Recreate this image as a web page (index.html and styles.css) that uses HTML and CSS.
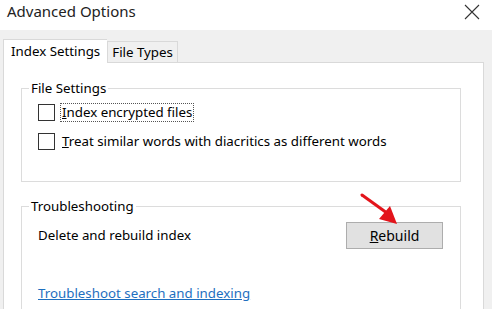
FILE: index.html
```html
<!DOCTYPE html>
<html lang="en">

<head>
    <meta charset="UTF-8">
    <meta name="viewport" content="width=device-width, initial-scale=1.0">
    <title>Advanced Options</title>
    <link rel="stylesheet" href="styles.css">
</head>

<body class="dialog">
    <!-- Barra de titulo -->
    <header class="dialog__title">
        <h1 class="title__text">Advanced Options</h1>
        <svg class="title__close" width="16" height="16" viewBox="0 0 16 16">
            <path d="M1 1 L15 15 M15 1 L1 15" stroke="#333" stroke-width="1.1" fill="none" />
        </svg>
    </header>

    <!-- Pestañas -->
    <nav class="tabs">
        <span class="tab tab--active">Index Settings</span>
        <span class="tab">File Types</span>
    </nav>

    <div class="dialog__body">
        <main class="panel">
            <fieldset class="group group--files">
                <legend class="group__legend">File Settings</legend>
                <label class="check">
                    <span class="check__box"></span>
                    <span class="check__text check__text--focus"><u>I</u>ndex encrypted files</span>
                </label>
                <label class="check">
                    <span class="check__box"></span>
                    <span class="check__text"><u>T</u>reat similar words with diacritics as different words</span>
                </label>
            </fieldset>

            <fieldset class="group group--trouble">
                <legend class="group__legend">Troubleshooting</legend>
                <div class="rebuild">
                    <span>Delete and rebuild index</span>
                    <div class="rebuild__action">
                        <svg class="rebuild__arrow" width="44" height="34" viewBox="0 0 44 34">
                            <path d="M2 2 L27 20" stroke="#e3141b" stroke-width="3" stroke-linecap="round" />
                            <path d="M19 26 L37 31 L30 13 Z" fill="#e3141b" />
                        </svg>
                        <button class="btn"><u>R</u>ebuild</button>
                    </div>
                </div>
                <a class="link" href="#">Troubleshoot search and indexing</a>
            </fieldset>
        </main>
    </div>
</body>

</html>
```

FILE: styles.css
```css
* {
    padding: 0;
    margin: 0;
    box-sizing: border-box;
}

/* Ventana */
.dialog {
    width: 492px;
    height: 309px;
    overflow: hidden;
    background-color: #ffffff;
    font-family: "Segoe UI", "Noto Sans", sans-serif;
    font-size: 13.3px;
    color: #000;
}

.dialog__title {
    height: 30px;
    display: flex;
    justify-content: space-between;
    align-items: flex-start;
    padding: 0 12px 0 7px;
}

.title__text {
    font-weight: normal;
    font-size: 15px;
    line-height: 22px;
    color: #222;
}

.title__close {
    margin-top: 4px;
}

/* Pestañas */
.tabs {
    height: 32px;
    display: flex;
    align-items: flex-end;
    padding-left: 3px;
    background-color: #f0f0f0;
}

.tab {
    height: 21px;
    padding: 0 4px;
    line-height: 20px;
    background-color: #f0f0f0;
    border: 1px solid #d9d9d9;
    border-bottom: none;
}

.tab--active {
    position: relative;
    z-index: 1;
    height: 24px;
    margin-bottom: -1px;
    padding: 0 7px;
    line-height: 23px;
    background-color: #ffffff;
    border-right: none;
}

/* Panel */
.dialog__body {
    height: 247px;
    padding: 0 8px 0 3px;
    background-color: #f0f0f0;
}

.panel {
    height: 100%;
    overflow: hidden;
    padding: 17px 22px 0 17px;
    background-color: #ffffff;
    border: 1px solid #d9d9d9;
    border-bottom: none;
}

.group {
    border: 1px solid #dcdcdc;
    padding: 0 0 0 16px;
}

.group__legend {
    margin-left: -9px;
    padding: 0 2px;
    line-height: 16px;
}

.group--files {
    height: 102px;
    padding-top: 2px;
}

.group--trouble {
    margin-top: 16px;
    height: 111px;
    padding-top: 7px;
    border-bottom: none;
}

.check {
    display: flex;
    align-items: center;
    gap: 5px;
    height: 29px;
}

.check__box {
    width: 17px;
    height: 17px;
    border: 1px solid #333;
    background-color: #fff;
}

.check__text {
    padding: 0 1px;
    line-height: 17px;
    border: 1px dotted transparent;
}

.check__text--focus {
    border-color: #555;
}

/* Reconstruir */
.rebuild {
    display: flex;
    justify-content: space-between;
    align-items: center;
    height: 28px;
    padding-right: 17px;
}

.rebuild__action {
    position: relative;
}

.rebuild__arrow {
    position: absolute;
    left: 14px;
    top: -29px;
}

.btn {
    width: 97px;
    height: 27px;
    font-family: inherit;
    font-size: 14px;
    background-color: #e1e1e1;
    border: 1px solid #adadad;
    color: #000;
}

.link {
    display: inline-block;
    margin-top: 35px;
    color: #1e6fc0;
}
```
